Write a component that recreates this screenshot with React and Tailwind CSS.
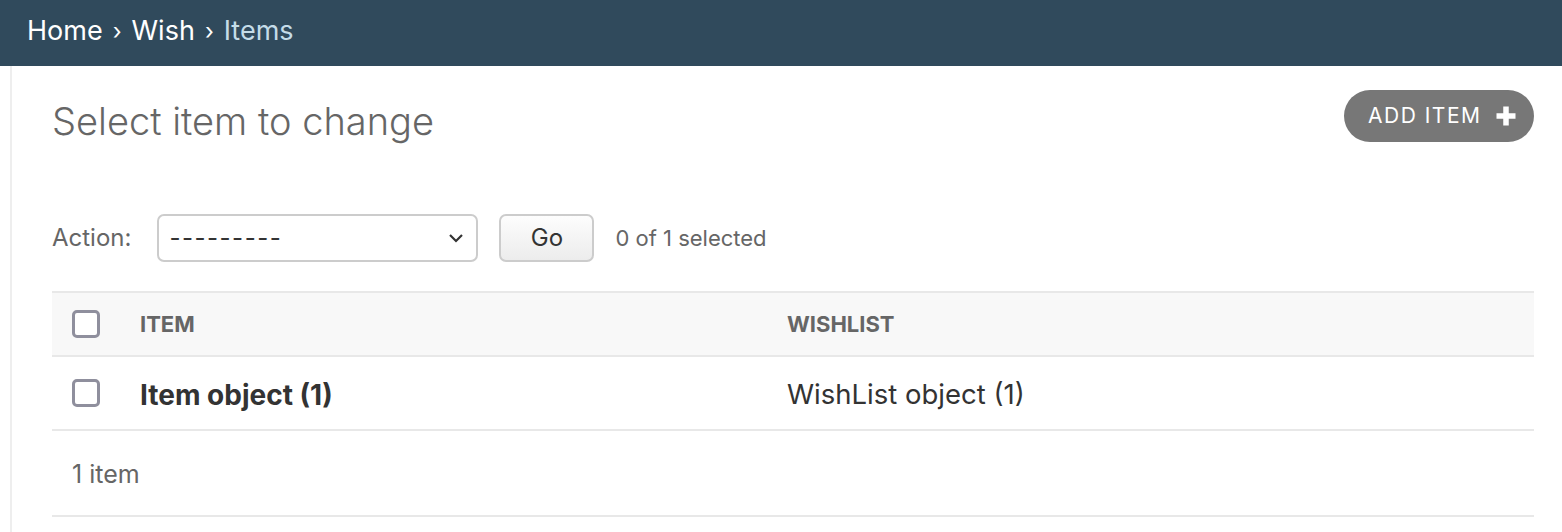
export default function App() {
  const font = { fontFamily: 'Inter, "Liberation Sans", sans-serif' };
  return (
    <div className="w-[1562px] h-[532px] overflow-hidden bg-white" style={font}>
      <div className="h-[66px] bg-[#304a5c] flex items-center pb-[4px] pl-[27px] text-[27px] text-white">
        <span>Home</span>
        <span className="mx-[10px] text-[23px]">›</span>
        <span>Wish</span>
        <span className="mx-[10px] text-[23px] text-white">›</span>
        <span className="text-[#c4dce8]">Items</span>
      </div>
      <div className="flex">
        <div className="w-[10px] shrink-0" />
        <div className="w-[2px] shrink-0 bg-[#eeeeee] h-[466px]" />
        <div className="flex-1 pl-[40px] pr-[28px]">
          <div className="flex items-start justify-between pt-[24px]">
            <h1 className="text-[38px] font-light text-[#666] leading-[60px] mt-[1px]">Select item to change</h1>
            <button className="mt-[0px] h-[52px] pl-[24px] pr-[14px] w-[190px] rounded-full bg-[#777] text-white text-[21px] tracking-[1.5px] flex items-center gap-[13px]">
              <span>ADD ITEM</span>
              <svg width="22" height="22" viewBox="0 0 22 22">
                <path d="M11 1.5v19M1.5 11h19" stroke="white" strokeWidth="5.5" />
              </svg>
            </button>
          </div>
          <div className="flex items-center mt-[63px] h-[48px]">
            <span className="text-[24px] text-[#666]">Action:</span>
            <div className="ml-[26px] w-[321px] h-[48px] border-2 border-[#ccc] rounded-[7px] flex items-center justify-between px-[10px]">
              <span className="text-[24px] text-[#333] tracking-[1.5px]">---------</span>
              <svg width="16" height="10" viewBox="0 0 16 10" className="mr-[2px]">
                <path d="M2 2l6 6 6-6" stroke="#333" strokeWidth="2.2" fill="none" />
              </svg>
            </div>
            <button className="ml-[21px] w-[95px] h-[48px] border-2 border-[#ccc] rounded-[7px] bg-gradient-to-b from-[#fdfdfd] to-[#ececec] text-[24px] text-[#333]">Go</button>
            <span className="ml-[21px] text-[22px] text-[#666]">0 of 1 selected</span>
          </div>
          <table className="mt-[29px] w-[1482px] border-collapse">
            <thead>
              <tr className="bg-[#f8f8f8] border-t-2 border-b-2 border-[#e8e8e8] h-[64px]">
                <th className="w-[68px] pl-[20px] text-left">
                  <div className="w-[28px] h-[28px] border-[3px] border-[#8f8f9d] rounded-[5px] bg-white" />
                </th>
                <th className="w-[647px] pl-[20px] text-left text-[22px] font-bold text-[#666]">ITEM</th>
                <th className="pl-[20px] text-left text-[22px] font-bold text-[#666]">WISHLIST</th>
              </tr>
            </thead>
            <tbody>
              <tr className="border-b-2 border-[#e8e8e8] h-[74px]">
                <td className="pl-[20px]">
                  <div className="w-[28px] h-[28px] border-[3px] border-[#8f8f9d] rounded-[5px] bg-white" />
                </td>
                <td className="pl-[20px] pt-[3px] text-[28px] font-bold text-[#333]">Item object (1)</td>
                <td className="pl-[20px] pt-[3px] text-[27.5px] text-[#333]">WishList object (1)</td>
              </tr>
              <tr className="border-b-2 border-[#e8e8e8] h-[86px]">
                <td colSpan={3} className="pl-[20px] pt-[3px] text-[25px] text-[#666]">1 item</td>
              </tr>
            </tbody>
          </table>
        </div>
      </div>
    </div>
  );
}
